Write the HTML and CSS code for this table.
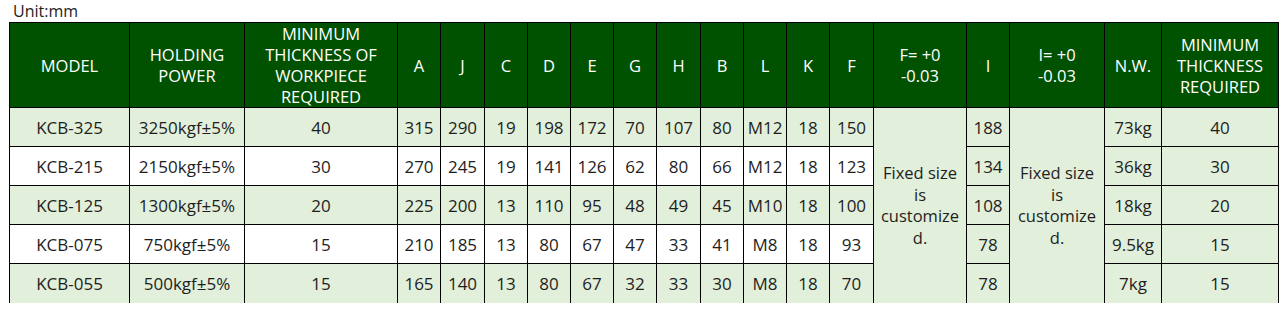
FILE: index.html
```html
<!DOCTYPE html>
<html lang="en">
<head>
<meta charset="utf-8">
<title>KCB Specifications</title>
<link rel="stylesheet" href="styles.css">
</head>
<body>
<div class="unit">Unit:mm</div>
<table class="spec">
  <colgroup>
    <col class="c-model"><col class="c-power"><col class="c-min">
    <col class="c-n"><col class="c-n2"><col class="c-n"><col class="c-n"><col class="c-n"><col class="c-n"><col class="c-n2"><col class="c-n"><col class="c-n"><col class="c-n"><col class="c-n2">
    <col class="c-tol"><col class="c-n"><col class="c-tol2"><col class="c-nw"><col class="c-last">
  </colgroup>
  <thead>
    <tr>
      <th>MODEL</th>
      <th>HOLDING<br>POWER</th>
      <th>MINIMUM<br>THICKNESS OF<br>WORKPIECE<br>REQUIRED</th>
      <th>A</th><th>J</th><th>C</th><th>D</th><th>E</th><th>G</th><th>H</th><th>B</th><th>L</th><th>K</th><th>F</th>
      <th>F= +0<br>-0.03</th>
      <th>I</th>
      <th>I= +0<br>-0.03</th>
      <th>N.W.</th>
      <th>MINIMUM<br>THICKNESS<br>REQUIRED</th>
    </tr>
  </thead>
  <tbody>
    <tr class="alt">
      <td>KCB-325</td><td>3250kgf±5%</td><td>40</td>
      <td>315</td><td>290</td><td>19</td><td>198</td><td>172</td><td>70</td><td>107</td><td>80</td><td>M12</td><td>18</td><td>150</td>
      <td class="fixed" rowspan="5">Fixed size<br>is<br>customize<br>d.</td>
      <td class="green">188</td>
      <td class="fixed" rowspan="5">Fixed size<br>is<br>customize<br>d.</td>
      <td class="green">73kg</td><td class="green">40</td>
    </tr>
    <tr>
      <td>KCB-215</td><td>2150kgf±5%</td><td>30</td>
      <td>270</td><td>245</td><td>19</td><td>141</td><td>126</td><td>62</td><td>80</td><td>66</td><td>M12</td><td>18</td><td>123</td>
      <td class="green">134</td>
      <td class="green">36kg</td><td class="green">30</td>
    </tr>
    <tr class="alt">
      <td>KCB-125</td><td>1300kgf±5%</td><td>20</td>
      <td>225</td><td>200</td><td>13</td><td>110</td><td>95</td><td>48</td><td>49</td><td>45</td><td>M10</td><td>18</td><td>100</td>
      <td class="green">108</td>
      <td class="green">18kg</td><td class="green">20</td>
    </tr>
    <tr>
      <td>KCB-075</td><td>750kgf±5%</td><td>15</td>
      <td>210</td><td>185</td><td>13</td><td>80</td><td>67</td><td>47</td><td>33</td><td>41</td><td>M8</td><td>18</td><td>93</td>
      <td class="green">78</td>
      <td class="green">9.5kg</td><td class="green">15</td>
    </tr>
    <tr class="alt">
      <td>KCB-055</td><td>500kgf±5%</td><td>15</td>
      <td>165</td><td>140</td><td>13</td><td>80</td><td>67</td><td>32</td><td>33</td><td>30</td><td>M8</td><td>18</td><td>70</td>
      <td class="green">78</td>
      <td class="green">7kg</td><td class="green">15</td>
    </tr>
  </tbody>
</table>
</body>
</html>
```

FILE: styles.css
```css
html, body {
  margin: 0;
  padding: 0;
  background: #ffffff;
}

body {
  font-family: "Open Sans", "Noto Sans", sans-serif;
  color: #1e1e1e;
  font-size: 16px;
}

.unit {
  height: 22px;
  line-height: 22px;
  padding-left: 13px;
  font-size: 16px;
  color: #222;
}

.spec {
  margin-left: 9px;
  width: 1270px;
  table-layout: fixed;
  border-collapse: collapse;
}

.c-model { width: 120px; }
.c-power { width: 115px; }
.c-min { width: 153px; }
.c-n { width: 43px; }
.c-n2 { width: 44px; }
.c-tol { width: 93px; }
.c-tol2 { width: 95px; }
.c-nw { width: 57px; }
.c-last { width: 117px; }

.spec th,
.spec td {
  border: 1px solid #000;
  border-bottom-style: none;
  padding: 0 1px;
  text-align: center;
  vertical-align: middle;
  white-space: nowrap;
}

.spec thead tr {
  height: 85px;
}

.spec th {
  background: #005100;
  color: #ffffff;
  font-weight: normal;
  font-size: 16.5px;
  line-height: 21px;
}

.spec tbody tr {
  height: 39px;
}

.spec td {
  font-size: 17px;
  line-height: 21px;
  background: #ffffff;
}

.spec tbody tr.alt td,
.spec td.green,
.spec td.fixed {
  background: #e2efda;
}

.spec td.fixed {
  font-size: 16.5px;
  line-height: 21.5px;
}
```
